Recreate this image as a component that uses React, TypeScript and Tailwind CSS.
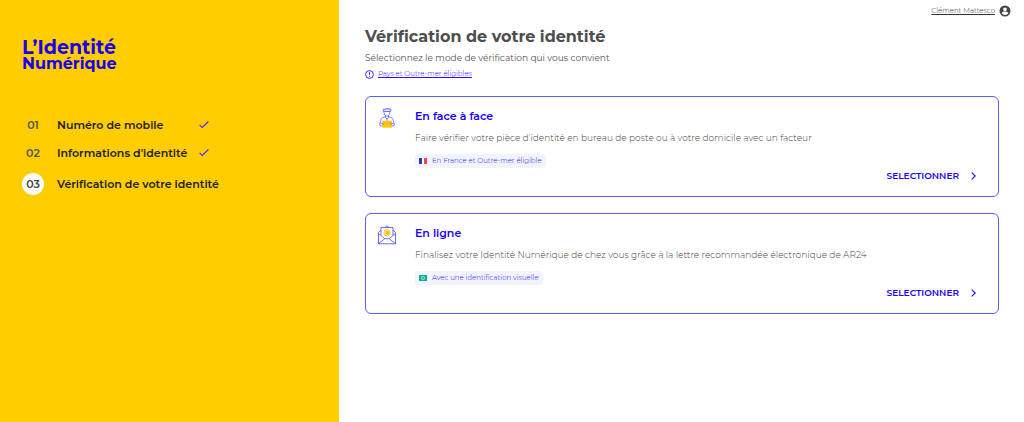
import React from "react";

const steps = [
  { num: "01", label: "Numéro de mobile", done: true },
  { num: "02", label: "Informations d'identité", done: true },
  { num: "03", label: "Vérification de votre identité", done: false },
];

const Check = () => (
  <svg className="h-2 w-[10px] text-[#4a2cff]" viewBox="0 0 10 8" fill="none" stroke="currentColor" strokeWidth="1.1">
    <path d="M0.6 3.9 3.2 6.500 9.400 0.500" />
  </svg>
);

const Postman = () => (
  <svg className="h-5 w-[18px]" viewBox="0 0 16 20" fill="none" stroke="#5a5aff" strokeWidth="0.8" strokeLinejoin="round" strokeLinecap="round">
    <path d="M4.3 1.5 8 .6l4 .5-.4 2.4H5z" fill="#dcdcff" />
    <path d="M5 3.500c-.2 2.800 1 4.700 2.900 4.700s3.100-1.900 2.900-4.700M6.500 8v1.500L8 11l1.500-1.500V8" />
    <path d="M6.300 8.800 3.500 9.700C2.200 10.300 2 12 1.500 13.500.7 15.200.2 17 1.500 18h2M9.700 8.800l2.800.9c1.300.6 1.500 2.300 2 3.800.8 1.700 1.300 3.500 0 4.500h-2M8 11v2" />
    <path d="M3.800 13h8.700v6.300H3.800z" fill="#ffc917" stroke="#ffc917" />
    <path d="m4.500 14 3.700 2.500L12 14" stroke="#f5a800" />
    <path d="m1.500 15 3 1.200M14.500 15l-3 1.200" />
  </svg>
);

const Letter = () => (
  <svg className="h-5 w-[18px]" viewBox="0 0 18 20" fill="none" stroke="#5a5aff" strokeWidth="0.9" strokeLinejoin="round">
    <path d="M3 5 .5 7.500v11.300h17V7.500L15 5" />
    <path d="M3 10V2.500h12V10M7 2.500 9 .7l2 1.800" />
    <path d="m.5 8.500 6.300 5.200h4.400l6.300-5.200M.7 18.600l6.100-4.900M17.300 18.600l-6.100-4.900" />
    <circle cx="9" cy="7.800" r="3.200" fill="#ffe58a" stroke="#ffc917" />
    <circle cx="9" cy="7.800" r="1.200" stroke="#f5a800" />
    <path d="M10.200 6.600v1.600c.2.900 1.300.7 1.700.2" stroke="#f5a800" />
  </svg>
);

const FrenchFlag = () => (
  <svg className="h-[6px] w-2" viewBox="0 0 8 6">
    <path fill="#fff" d="M0 0h8v6H0z" />
    <path fill="#1f3fae" d="M0 0h3v6H0z" />
    <path fill="#f3444f" d="M5 0h3v6H5z" />
  </svg>
);

const Camera = () => (
  <svg className="h-[6px] w-2" viewBox="0 0 8 6">
    <path fill="#0fae9c" d="M0 0h8v6H0z" />
    <circle cx="4" cy="3" r="1.700" fill="none" stroke="#9fe3d8" strokeWidth="0.8" />
    <circle cx="4" cy="3" r="0.600" fill="#d4f5ee" />
  </svg>
);

const Card = ({ icon, title, text, badgeIcon, badge }) => (
  <section className="flex rounded-md border border-[#5c5cff] pt-[11px] pr-[22px] pb-3 pl-3">
    <div className="flex w-[37px] shrink-0">{icon}</div>
    <div className="flex min-w-0 flex-1 flex-col items-start">
      <h2 className="text-[11px] leading-4 font-semibold text-[#1b00ff]">{title}</h2>
      <p className="mt-2 text-[9px] leading-3 font-light text-[#444]">{text}</p>
      <span className="mt-[10px] flex h-[14px] items-center gap-[5px] rounded-sm bg-[#f1f3ff] px-1 text-[7px] font-light text-[#2a10ff]">
        {badgeIcon}
        {badge}
      </span>
      <button className="flex items-center gap-3 self-end text-[9px] leading-4 font-semibold text-[#1b00ff]">
        SELECTIONNER
        <svg className="h-2 w-[5px]" viewBox="0 0 5 8" fill="none" stroke="currentColor" strokeWidth="1.100">
          <path d="M.7.6 4.200 4 .7 7.400" />
        </svg>
      </button>
    </div>
  </section>
);

export default () => {
  return (
    <div className="flex min-h-screen bg-white font-['Montserrat','Inter',sans-serif]">
      <aside className="w-[33.1%] shrink-0 bg-[#ffcd00] px-[22px] pt-10">
        <div className="font-bold text-[#1b00e6]">
          <div className="text-[19px] leading-4">L’Identité</div>
          <div className="text-[16px] leading-4">Numérique</div>
        </div>
        <ol className="mt-[43px] flex flex-col gap-2">
          {steps.map((step) => (
            <li
              key={step.num}
              className={
                step.done
                  ? "flex items-center text-[11px] leading-5 font-semibold text-[#222]"
                  : "flex items-center py-[2px] text-[11px] leading-5 font-semibold text-[#222]"
              }
            >
              <span
                className={
                  step.done
                    ? "w-[22px] text-center text-[#555]"
                    : "flex size-[22px] items-center justify-center rounded-full bg-white text-[#444]"
                }
              >
                {step.num}
              </span>
              <span className={step.done ? "ml-[13px] w-[142px]" : "ml-[13px]"}>{step.label}</span>
              {step.done && <Check />}
            </li>
          ))}
        </ol>
      </aside>

      <main className="min-w-0 flex-1 pr-[25px] pl-[26px]">
        <div className="-mr-3 flex items-center justify-end gap-1 pt-[5px]">
          <a href="#compte" className="text-[7px] leading-3 font-light text-[#333] underline">
            Clément Mattesco
          </a>
          <svg className="size-3" viewBox="0 0 24 24" fill="#444">
            <path d="M12 1a11 11 0 1 0 0 22 11 11 0 0 0 0-22Zm0 4a3.700 3.700 0 1 1 0 7.400A3.700 3.700 0 0 1 12 5Zm0 15a8 8 0 0 1-6.700-3.600c.1-2.200 4.500-3.400 6.700-3.400s6.600 1.200 6.700 3.400A8 8 0 0 1 12 20Z" />
          </svg>
        </div>
        <h1 className="mt-2 text-[16px] leading-6 font-bold text-[#4d4d4d]">Vérification de votre identité</h1>
        <p className="mt-[3px] text-[9px] leading-3 text-[#555]">
          Sélectionnez le mode de vérification qui vous convient
        </p>
        <div className="mt-1 flex items-center gap-1">
          <svg className="size-[9px]" viewBox="0 0 9 9" fill="none" stroke="#3a2cff">
            <circle cx="4.500" cy="4.500" r="3.900" />
            <path d="M4.500 2.200v2.600M4.500 5.700v1" />
          </svg>
          <a href="#pays" className="text-[7px] leading-3 font-light text-[#2a10ff] underline">
            Pays et Outre-mer éligibles
          </a>
        </div>
        <div className="mt-4 flex flex-col gap-4">
          <Card
            icon={<Postman />}
            title="En face à face"
            text="Faire vérifier votre pièce d'identité en bureau de poste ou à votre domicile avec un facteur"
            badgeIcon={<FrenchFlag />}
            badge="En France et Outre-mer éligible"
          />
          <Card
            icon={<Letter />}
            title="En ligne"
            text="Finalisez votre Identité Numérique de chez vous grâce à la lettre recommandée électronique de AR24"
            badgeIcon={<Camera />}
            badge="Avec une identification visuelle"
          />
        </div>
      </main>
    </div>
  );
};
